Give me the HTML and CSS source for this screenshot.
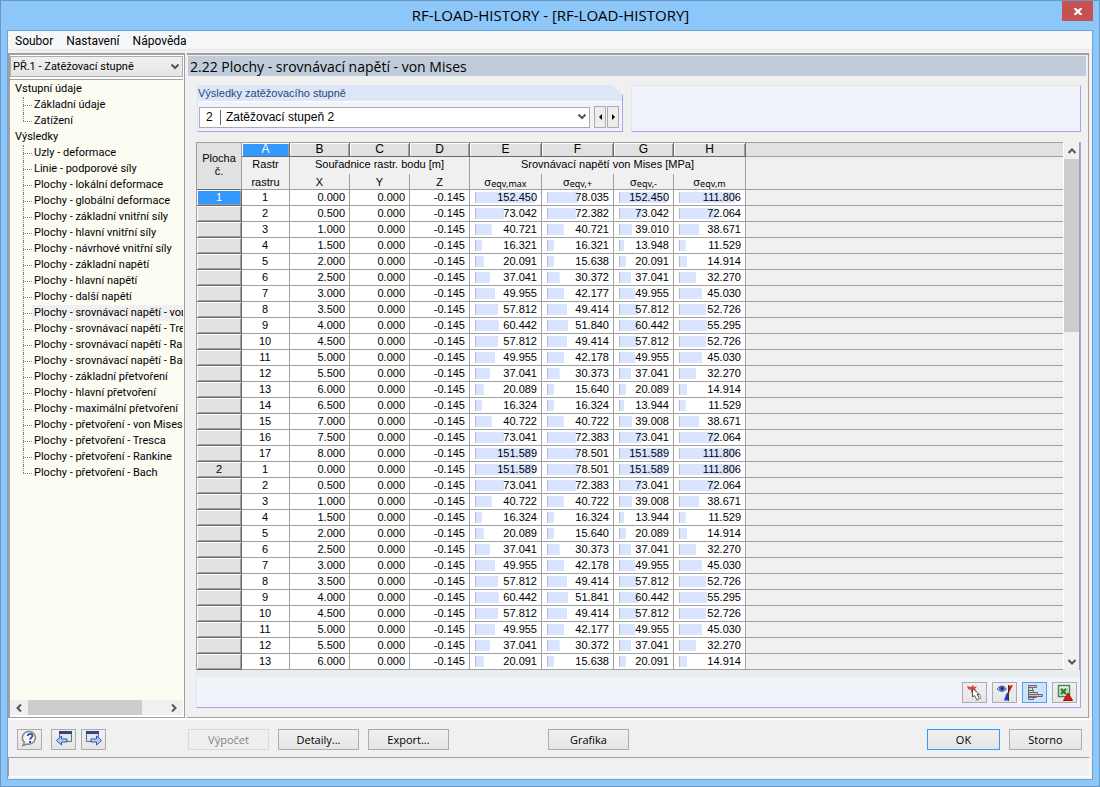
FILE: index.html
```html
<!DOCTYPE html>
<html lang="cs">
<head>
<meta charset="utf-8">
<title>RF-LOAD-HISTORY - [RF-LOAD-HISTORY]</title>
<link rel="stylesheet" href="styles.css">
</head>
<body>
<div class="window">
  <header class="titlebar">
    <h1 class="titlebar-text">RF-LOAD-HISTORY - [RF-LOAD-HISTORY]</h1>
    <button class="close" type="button" aria-label="Zavřít">
      <svg width="8" height="7" viewBox="0 0 8 7"><path d="M0 0h2l2 2 2-2h2v1L5.500 3.500 8 6v1H6L4 5 2 7H0V6l2.500-2.500L0 1z" fill="#fff"/></svg>
    </button>
  </header>

  <div class="client">
    <nav class="menubar">
      <button type="button">Soubor</button>
      <button type="button">Nastavení</button>
      <button type="button">Nápověda</button>
    </nav>

    <div class="work">
      <aside class="sidebar">
        <div class="case-select combo">
          <select aria-label="Případ">
            <option>PŘ.1 - Zatěžovací stupně</option>
          </select>
          <svg class="combo-arrow" width="8" height="6" viewBox="0 0 8 6"><path d="M0.500 0.500L4 4l3.500-3.500" fill="none" stroke="#555" stroke-width="2"/></svg>
        </div>
        <ul class="tree">
          <li><a href="#">Vstupní údaje</a>
            <ul>
              <li><a href="#">Základní údaje</a></li>
              <li><a href="#">Zatížení</a></li>
            </ul>
          </li>
          <li><a href="#">Výsledky</a>
            <ul>
              <li><a href="#">Uzly - deformace</a></li>
              <li><a href="#">Linie - podporové síly</a></li>
              <li><a href="#">Plochy - lokální deformace</a></li>
              <li><a href="#">Plochy - globální deformace</a></li>
              <li><a href="#">Plochy - základní vnitřní síly</a></li>
              <li><a href="#">Plochy - hlavní vnitřní síly</a></li>
              <li><a href="#">Plochy - návrhové vnitřní síly</a></li>
              <li><a href="#">Plochy - základní napětí</a></li>
              <li><a href="#">Plochy - hlavní napětí</a></li>
              <li><a href="#">Plochy - další napětí</a></li>
              <li><a href="#" class="selected">Plochy - srovnávací napětí - von Mises</a></li>
              <li><a href="#">Plochy - srovnávací napětí - Tresca</a></li>
              <li><a href="#">Plochy - srovnávací napětí - Rankine</a></li>
              <li><a href="#">Plochy - srovnávací napětí - Bach</a></li>
              <li><a href="#">Plochy - základní přetvoření</a></li>
              <li><a href="#">Plochy - hlavní přetvoření</a></li>
              <li><a href="#">Plochy - maximální přetvoření</a></li>
              <li><a href="#">Plochy - přetvoření - von Mises</a></li>
              <li><a href="#">Plochy - přetvoření - Tresca</a></li>
              <li><a href="#">Plochy - přetvoření - Rankine</a></li>
              <li><a href="#">Plochy - přetvoření - Bach</a></li>
            </ul>
          </li>
        </ul>
        <div class="hscroll">
          <button type="button" aria-label="Doleva"><svg width="6" height="8" viewBox="0 0 6 8"><path d="M5 0.500L1.500 4 5 7.500" fill="none" stroke="#555" stroke-width="2"/></svg></button>
          <div class="hscroll-track"><div class="hscroll-thumb"></div></div>
          <button type="button" aria-label="Doprava"><svg width="6" height="8" viewBox="0 0 6 8"><path d="M1 0.500L4.500 4 1 7.500" fill="none" stroke="#555" stroke-width="2"/></svg></button>
        </div>
      </aside>

      <main class="content">
        <h2 class="content-title">2.22 Plochy - srovnávací napětí - von Mises</h2>
        <div class="groups">
          <section class="group">
            <label class="group-title" for="step">Výsledky zatěžovacího stupně</label>
            <div class="group-body">
              <div class="combo step-combo">
                <select id="step">
                  <option>2&nbsp;&nbsp;&nbsp;&nbsp;Zatěžovací stupeň 2</option>
                </select>
                <svg class="combo-arrow" width="8" height="6" viewBox="0 0 8 6"><path d="M0.500 0.500L4 4l3.500-3.500" fill="none" stroke="#555" stroke-width="2"/></svg>
              </div>
              <div class="steppers">
                <button type="button" aria-label="Předchozí"><svg width="3" height="6" viewBox="0 0 3 6"><path d="M3 0v6L0 3z"/></svg></button>
                <button type="button" aria-label="Další"><svg width="3" height="6" viewBox="0 0 3 6"><path d="M0 0v6l3-3z"/></svg></button>
              </div>
            </div>
          </section>
          <section class="group-empty"></section>
        </div>

        <section class="results">
          <div class="grid">
            <div class="grid-view">
              <table>
                <colgroup>
                  <col class="c-no"><col class="c-raster"><col class="c-mid"><col class="c-mid"><col class="c-mid"><col class="c-wide"><col class="c-wide"><col class="c-mid"><col class="c-wide"><col>
                </colgroup>
                <thead>
                  <tr class="letters">
                    <th class="corner" rowspan="3">Plocha<br>č.</th>
                    <th class="active">A</th><th>B</th><th>C</th><th>D</th><th>E</th><th>F</th><th>G</th><th>H</th><th class="rest"></th>
                  </tr>
                  <tr class="names">
                    <th>Rastr</th>
                    <th colspan="3">Souřadnice rastr. bodu [m]</th>
                    <th colspan="4">Srovnávací napětí von Mises [MPa]</th>
                    <th class="rest"></th>
                  </tr>
                  <tr class="units">
                    <th>rastru</th><th>X</th><th>Y</th><th>Z</th>
                    <th>σ<span class="sub">eqv,max</span></th>
                    <th>σ<span class="sub">eqv,+</span></th>
                    <th>σ<span class="sub">eqv,-</span></th>
                    <th>σ<span class="sub">eqv,m</span></th>
                    <th class="rest"></th>
                  </tr>
                </thead>
                <tbody id="rows"></tbody>
              </table>
            </div>
            <div class="vscroll">
              <button type="button" aria-label="Nahoru"><svg width="8" height="6" viewBox="0 0 8 6"><path d="M0.500 5L4 1.500 7.500 5" fill="none" stroke="#555" stroke-width="2"/></svg></button>
              <div class="vscroll-track"><div class="vscroll-thumb"></div></div>
              <button type="button" aria-label="Dolů"><svg width="8" height="6" viewBox="0 0 8 6"><path d="M0.500 1L4 4.500 7.500 1" fill="none" stroke="#555" stroke-width="2"/></svg></button>
            </div>
          </div>
          <div class="tools">
            <button type="button" class="icon-button" aria-label="Vybrat v grafice">
              <svg width="18" height="18" viewBox="0 0 18 18"><path d="M1 2l4 1 2-2 1 2 3-1-2 3 2 2-3-1-3 3V6L2 5z" fill="#e04848"/><path d="M6.500 4.500v8.500l2-1.500 2.500 4.500 2.500-1.500-2.500-4h2.500z" fill="#fff" stroke="#555"/><path d="M9.500 16.500l2-1M14 11l1 4" stroke="#999" fill="none"/></svg>
            </button>
            <button type="button" class="icon-button" aria-label="Zobrazení">
              <svg width="18" height="18" viewBox="0 0 18 18"><path d="M1 5Q5.500-0.500 10.500 5 6 9.500 1 5z" fill="#dce8fa" stroke="#586068"/><circle cx="6" cy="4.500" r="3" fill="#3f6fc4"/><circle cx="6" cy="4.500" r="1.200" fill="#102060"/><path d="M12 2l5-1-4 8h-1z" fill="#e01818"/><path d="M12 8v8.500H8l2-6z" fill="#2338d0"/><path d="M12.500 1v16" stroke="#333" fill="none"/></svg>
            </button>
            <button type="button" class="icon-button pressed" aria-label="Sloupce">
              <svg width="18" height="18" viewBox="0 0 18 18"><g stroke="#667" stroke-width="1"><path d="M2.500 1.500h8v2h-8z" fill="#f6b0b0"/><path d="M2.500 3.500h4v3h-4z" fill="#c0e6c0"/><path d="M2.500 6.500h5v2h-5z" fill="#c0e6c0"/><path d="M2.500 8.500h9v2h-9z" fill="#c0e6c0"/><path d="M2.500 10.500h14v2h-14z" fill="#f6b0b0"/><path d="M2.500 12.500h8v1h-8z" fill="#f6b0b0"/><path d="M2.500 13.500h5v2h-5z" fill="#c0e6c0"/></g></svg>
            </button>
            <button type="button" class="icon-button" aria-label="Export do Excelu">
              <svg width="18" height="18" viewBox="0 0 18 18"><path d="M2.500 1.500h11v11h-11z" fill="#e8f4e6" stroke="#4c8a4c" stroke-width="1.500"/><path d="M4 4h8v7H4z" fill="#b8d8b4"/><path d="M5 5l5 5M10 5l-5 5" stroke="#2d7a35" stroke-width="2"/><path d="M7.500 16.500L12 9l4.500 7.500z" fill="#e01818" stroke="#a01010"/></svg>
            </button>
          </div>
        </section>
      </main>
    </div>

    <footer class="actions">
      <button type="button" class="icon-button" aria-label="Nápověda">
        <svg width="18" height="18" viewBox="0 0 18 18"><path d="M9 1.500a6.800 6.300 0 1 1-3 12.500L2 15.500l1.500-3.200A6.500 6.300 0 0 1 9 1.500z" fill="#f6f6f8" stroke="#85858c" stroke-width="1.500"/><path d="M6.800 6c.2-2.800 5-2.600 4.600 0-.2 1.600-2.100 1.500-2.300 3.600" fill="none" stroke="#2d4fae" stroke-width="1.800"/><path d="M8 11h2v2H8z" fill="#2d4fae"/></svg>
      </button>
      <div class="nav-icons">
        <button type="button" class="icon-button" aria-label="Předchozí tabulka">
          <svg width="18" height="18" viewBox="0 0 18 18"><path d="M4.500 1.500h12v10h-12z" fill="#e4e6ea" stroke="#6a6d75"/><path d="M4 1h13v3H4z" fill="#34457e"/><path d="M1.500 10.500l5-4.500v3h5.500v3H6.500v3z" fill="#b4cdf8" stroke="#2c56b4"/></svg>
        </button>
        <button type="button" class="icon-button" aria-label="Další tabulka">
          <svg width="18" height="18" viewBox="0 0 18 18"><path d="M1.500 1.500h12v10h-12z" fill="#e4e6ea" stroke="#6a6d75"/><path d="M1 1h13v3H1z" fill="#34457e"/><path d="M16.500 10.500l-5-4.500v3H6v3h5.500v3z" fill="#b4cdf8" stroke="#2c56b4"/></svg>
        </button>
      </div>
      <div class="commands">
        <button type="button" class="command" disabled>Výpočet</button>
        <button type="button" class="command">Detaily...</button>
        <button type="button" class="command">Export...</button>
      </div>
      <button type="button" class="command">Grafika</button>
      <div class="confirm">
        <button type="button" class="command narrow default">OK</button>
        <button type="button" class="command narrow">Storno</button>
      </div>
    </footer>
    <div class="statusbar"></div>
  </div>
</div>
<script src="app.js"></script>
</body>
</html>
```

FILE: styles.css
```css
* {
  box-sizing: border-box;
}

body {
  margin: 0;
  font: 11px/16px "Open Sans", "Noto Sans", sans-serif;
  color: #000;
}

button,
select {
  margin: 0;
  padding: 0;
  font: inherit;
  color: inherit;
  border-radius: 0;
}

svg {
  display: block;
}

.window {
  display: flex;
  flex-direction: column;
  height: 100vh;
  padding: 0 6px 6px;
  background: #8dc7fa;
  border: 1px solid #6798c4;
}

/* Title bar */
.titlebar {
  display: flex;
  align-items: flex-start;
  height: 29px;
  flex: none;
}

.titlebar-text {
  flex: 1;
  margin: 0;
  padding-left: 32px;
  font-size: 15px;
  line-height: 28px;
  font-weight: 400;
  text-align: center;
}

.close {
  display: grid;
  place-items: center;
  width: 31px;
  height: 20px;
  background: #c75050;
  border: 0;
}

.client {
  display: flex;
  flex-direction: column;
  flex: 1;
  min-height: 0;
  background: #f0f0f0;
  border: 1px solid #6fa3d2;
}

.menubar {
  display: flex;
  gap: 13px;
  flex: none;
  height: 19px;
  padding: 1px 0 0 7px;
  font: 12px/16px Roboto, "Open Sans", sans-serif;
  background: #f5f6f8;
  border-bottom: 1px solid #e8e8e8;
}

.menubar button {
  background: none;
  border: 0;
}

/* Work area */
.work {
  display: flex;
  gap: 2px;
  flex: 1;
  min-height: 0;
  margin-top: 3px;
  padding-right: 3px;
  border-bottom: 2px solid #fff;
}

.sidebar {
  display: flex;
  flex-direction: column;
  flex: none;
  width: 177px;
  background: #fff;
  border: 1px solid #a0a0a0;
  border-width: 2px 1px 1px 2px;
  padding: 1px 1px 2px 0;
  font-family: Roboto, "Open Sans", sans-serif;
}

.combo {
  display: grid;
  align-items: center;
}

.combo select,
.combo-arrow {
  grid-area: 1 / 1;
}

.combo select {
  width: 100%;
  height: 21px;
  padding-left: 6px;
  appearance: none;
  background: #fff;
  border: 1px solid #acacac;
}

.combo-arrow {
  justify-self: end;
  margin-right: 4px;
  pointer-events: none;
}

.case-select select {
  padding: 1px 0 0 2px;
  background: linear-gradient(#f0f0f0, #e5e5e5);
}

.tree,
.tree ul {
  margin: 0;
  padding: 0;
  list-style: none;
}

.tree {
  flex: 1;
  min-height: 0;
  margin-top: 2px;
  padding-top: 1px;
  overflow: hidden;
  white-space: nowrap;
  background: #fcfcf3;
  border-top: 1px solid #a0a0a0;
}

.tree > li > a {
  padding-left: 5px;
}

.tree a {
  display: block;
  color: #000;
  text-decoration: none;
}

.tree ul {
  margin-left: 13px;
}

.tree ul li {
  position: relative;
  padding-left: 9px;
}

.tree ul a {
  padding-left: 2px;
}

.tree ul li::before {
  content: "";
  position: absolute;
  left: 0;
  top: 0;
  bottom: 0;
  border-left: 1px dotted #808080;
}

.tree ul li:last-child::before {
  bottom: 8px;
}

.tree ul li::after {
  content: "";
  position: absolute;
  left: 0;
  top: 8px;
  width: 9px;
  border-top: 1px dotted #808080;
}

.tree .selected {
  background: #f0f0f0;
}

.hscroll {
  display: flex;
  flex: none;
  height: 15px;
  background: #f0f0f0;
}

.hscroll button,
.vscroll button {
  display: grid;
  place-items: center;
  background: none;
  border: 0;
}

.hscroll button {
  width: 18px;
}

.hscroll-track {
  flex: 1;
}

.hscroll-thumb {
  width: 83%;
  height: 100%;
  background: #cdcdcd;
}

.content {
  display: flex;
  flex-direction: column;
  flex: 1;
  min-width: 0;
  padding: 1px 7px 9px 1px;
  border: 1px solid #a0a0a0;
  border-width: 2px 1px 1px 0;
}

.content-title {
  flex: none;
  margin: 0 -5px 0 0;
  padding-left: 2px;
  height: 20px;
  font-size: 14px;
  line-height: 21px;
  font-weight: 400;
  background: #c0ccd9;
}

.groups {
  display: flex;
  gap: 8px;
  flex: none;
  margin: 9px 0 10px 9px;
}

.group {
  flex: 0 1 426px;
  background: #f0f4fa;
  border-left: 1px solid #dce6f6;
  border-right: 1px solid #a6a6ec;
  border-bottom: 1px solid #a6a6ec;
  clip-path: polygon(0 0, calc(100% - 10px) 0, 100% 10px, 100% 100%, 0 100%);
}

.group-title {
  display: block;
  height: 17px;
  font: 11px/17px "Liberation Sans", Arial, sans-serif;
  color: #1f4a7c;
  background: #dce6f6;
  border-bottom: 1px solid #fff;
}

.group-body {
  display: flex;
  gap: 4px;
  padding: 4px 3px 3px 1px;
}

.step-combo {
  flex: 1;
}

.step-combo select {
  font: 12px "Liberation Sans", Arial, sans-serif;
  background: linear-gradient(#666, #666) 20px center / 1px 15px no-repeat #fff;
}

.steppers {
  display: flex;
  gap: 1px;
}

.steppers button {
  display: grid;
  place-items: center;
  width: 12px;
  height: 22px;
  background: #ededed;
  border: 1px solid #acacac;
}

.group-empty {
  flex: 1;
  background: #f0f4fa;
  border: 1px solid #a6a6ec;
  border-top-color: #dce6f6;
  border-left-color: #dce6f6;
}

/* Results grid */
.results {
  display: flex;
  flex-direction: column;
  flex: 1;
  min-height: 0;
  margin-left: 8px;
  border-right: 1px solid #a6a6ec;
}

.grid {
  display: flex;
  flex: 1;
  min-height: 0;
  border-right: 1px solid #a0a0a0;
}

.grid-view {
  flex: 1;
  min-width: 0;
  overflow: hidden;
  border-top: 1px solid #a0a0a0;
  border-left: 1px solid #a0a0a0;
}

table {
  width: 100%;
  table-layout: fixed;
  border-collapse: separate;
  border-spacing: 0;
  font: 11px/15px "Liberation Sans", Arial, sans-serif;
}

.c-no {
  width: 45px;
}

.c-raster {
  width: 48px;
}

.c-mid {
  width: 60px;
}

.c-wide {
  width: 72px;
}

th,
td {
  height: 16px;
  padding: 0;
  border-right: 1px solid #a0a0a0;
  border-bottom: 1px solid #a0a0a0;
  white-space: nowrap;
}

th {
  font-weight: 400;
  text-align: center;
  background: #f0f0f0;
}

.letters th {
  height: 14px;
  font-size: 12px;
  line-height: 13px;
  background: #e1e1e1;
  border-color: #696969;
  box-shadow: inset 1px 1px #fff, inset -1px 0 #a0a0a0;
}

.letters .active {
  color: #fff;
  background: #3399ff;
}

.letters .corner {
  padding-bottom: 2px;
  font-size: 11px;
  box-shadow: none;
  border-right-color: #a0a0a0;
}

.names th {
  height: 17px;
  padding-bottom: 2px;
  border-bottom: 0;
}

.units th {
  line-height: 14px;
}

.sub {
  font: 9px/9px "Noto Sans", sans-serif;
  vertical-align: -1px;
}

th.rest,
td.rest {
  background: #f0f0f0;
  border-right: 0;
  box-shadow: none;
}

.letters th.rest {
  background: #e1e1e1;
  border-color: #a0a0a0;
}

.row-head {
  background: #e1e1e1;
  border-color: #696969;
  box-shadow: inset 1px 1px #fff, inset -1px -1px #a0a0a0;
}

.row-head.active {
  color: #fff;
  background: #3399ff;
}

td {
  padding-right: 4px;
  text-align: right;
  background-color: #fff;
}

td.raster {
  padding-right: 1px;
  text-align: center;
}

/* --share is the bar length as a percentage of the cell width */
td.bar {
  background-image: linear-gradient(#b8bcc8, #b8bcc8), linear-gradient(#d9e4ff, #d9e4ff);
  background-position: 5px 2px, 6px 2px;
  background-size: 1px 11px, var(--share) 11px;
  background-repeat: no-repeat;
}

.vscroll {
  display: flex;
  flex-direction: column;
  flex: none;
  width: 16px;
  background: #f0f0f0;
  border-left: 1px solid #fff;
}

.vscroll button {
  height: 17px;
}

.vscroll-track {
  flex: 1;
}

.vscroll-thumb {
  height: 35%;
  background: #cdcdcd;
}

.tools {
  display: flex;
  justify-content: flex-end;
  gap: 5px;
  flex: none;
  padding: 5px 3px 4px;
  background: #f0f4fa;
  border-top: 7px solid #e8eeee;
  border-left: 1px solid #dce6f6;
  border-bottom: 1px solid #a6a6ec;
}

.icon-button {
  display: grid;
  place-items: center;
  width: 25px;
  height: 21px;
  background: linear-gradient(#f0f0f0, #e5e5e5);
  border: 1px solid #acacac;
}

.icon-button.pressed {
  background: #cce4fc;
  border-color: #569de5;
}

/* Bottom area */
.actions {
  display: flex;
  align-items: center;
  flex: none;
  height: 37px;
  padding: 1px 10px 0 9px;
}

.nav-icons {
  display: flex;
  gap: 5px;
  margin: 0 82px 0 9px;
}

.commands {
  display: flex;
  gap: 9px;
  margin-right: 99px;
}

.command {
  width: 81px;
  height: 21px;
  line-height: 19px;
  background: linear-gradient(#f0f0f0, #e5e5e5);
  border: 1px solid #acacac;
}

.command:disabled {
  color: #838383;
  background: #efefef;
  border-color: #d9d9d9;
}

.confirm {
  display: flex;
  gap: 9px;
  margin-left: auto;
}

.narrow {
  width: 73px;
}

.default {
  border-color: #3399ff;
}

.statusbar {
  flex: none;
  height: 20px;
  margin: 0 2px 2px 0;
  border: 1px solid #a0a0a0;
  border-right-color: #fff;
  border-bottom-color: #fff;
}
```

FILE: app.js
```js
// Equivalent stresses per surface, one entry for each raster point.
const surfaces = {
  1: [
    [152.450, 78.035, 152.450, 111.806],
    [73.042, 72.382, 73.042, 72.064],
    [40.721, 40.721, 39.010, 38.671],
    [16.321, 16.321, 13.948, 11.529],
    [20.091, 15.638, 20.091, 14.914],
    [37.041, 30.372, 37.041, 32.270],
    [49.955, 42.177, 49.955, 45.030],
    [57.812, 49.414, 57.812, 52.726],
    [60.442, 51.840, 60.442, 55.295],
    [57.812, 49.414, 57.812, 52.726],
    [49.955, 42.178, 49.955, 45.030],
    [37.041, 30.373, 37.041, 32.270],
    [20.089, 15.640, 20.089, 14.914],
    [16.324, 16.324, 13.944, 11.529],
    [40.722, 40.722, 39.008, 38.671],
    [73.041, 72.383, 73.041, 72.064],
    [151.589, 78.501, 151.589, 111.806]
  ],
  2: [
    [151.589, 78.501, 151.589, 111.806],
    [73.041, 72.383, 73.041, 72.064],
    [40.722, 40.722, 39.008, 38.671],
    [16.324, 16.324, 13.944, 11.529],
    [20.089, 15.640, 20.089, 14.914],
    [37.041, 30.373, 37.041, 32.270],
    [49.955, 42.178, 49.955, 45.030],
    [57.812, 49.414, 57.812, 52.726],
    [60.442, 51.841, 60.442, 55.295],
    [57.812, 49.414, 57.812, 52.726],
    [49.955, 42.177, 49.955, 45.030],
    [37.041, 30.372, 37.041, 32.270],
    [20.091, 15.638, 20.091, 14.914]
  ]
};

// Stress that would fill the whole cell width, per column.
const fullScale = [184, 184, 192, 144];

const body = document.getElementById("rows");

function addCell(row, text, className) {
  const cell = row.insertCell();
  cell.textContent = text;
  if (className) cell.className = className;
  return cell;
}

for (const [surface, points] of Object.entries(surfaces)) {
  points.forEach((stresses, i) => {
    const row = body.insertRow();
    const head = document.createElement("th");
    head.scope = "row";
    head.className = surface === "1" && i === 0 ? "row-head active" : "row-head";
    head.textContent = i === 0 ? surface : "";
    row.append(head);
    addCell(row, i + 1, "raster");
    addCell(row, (i * 0.5).toFixed(3));
    addCell(row, "0.000");
    addCell(row, "-0.145");
    stresses.forEach((value, k) => {
      const cell = addCell(row, value.toFixed(3), "bar");
      cell.style.setProperty("--share", Math.min(84, value / fullScale[k] * 100).toFixed(1) + "%");
    });
    addCell(row, "", "rest");
  });
}
```
